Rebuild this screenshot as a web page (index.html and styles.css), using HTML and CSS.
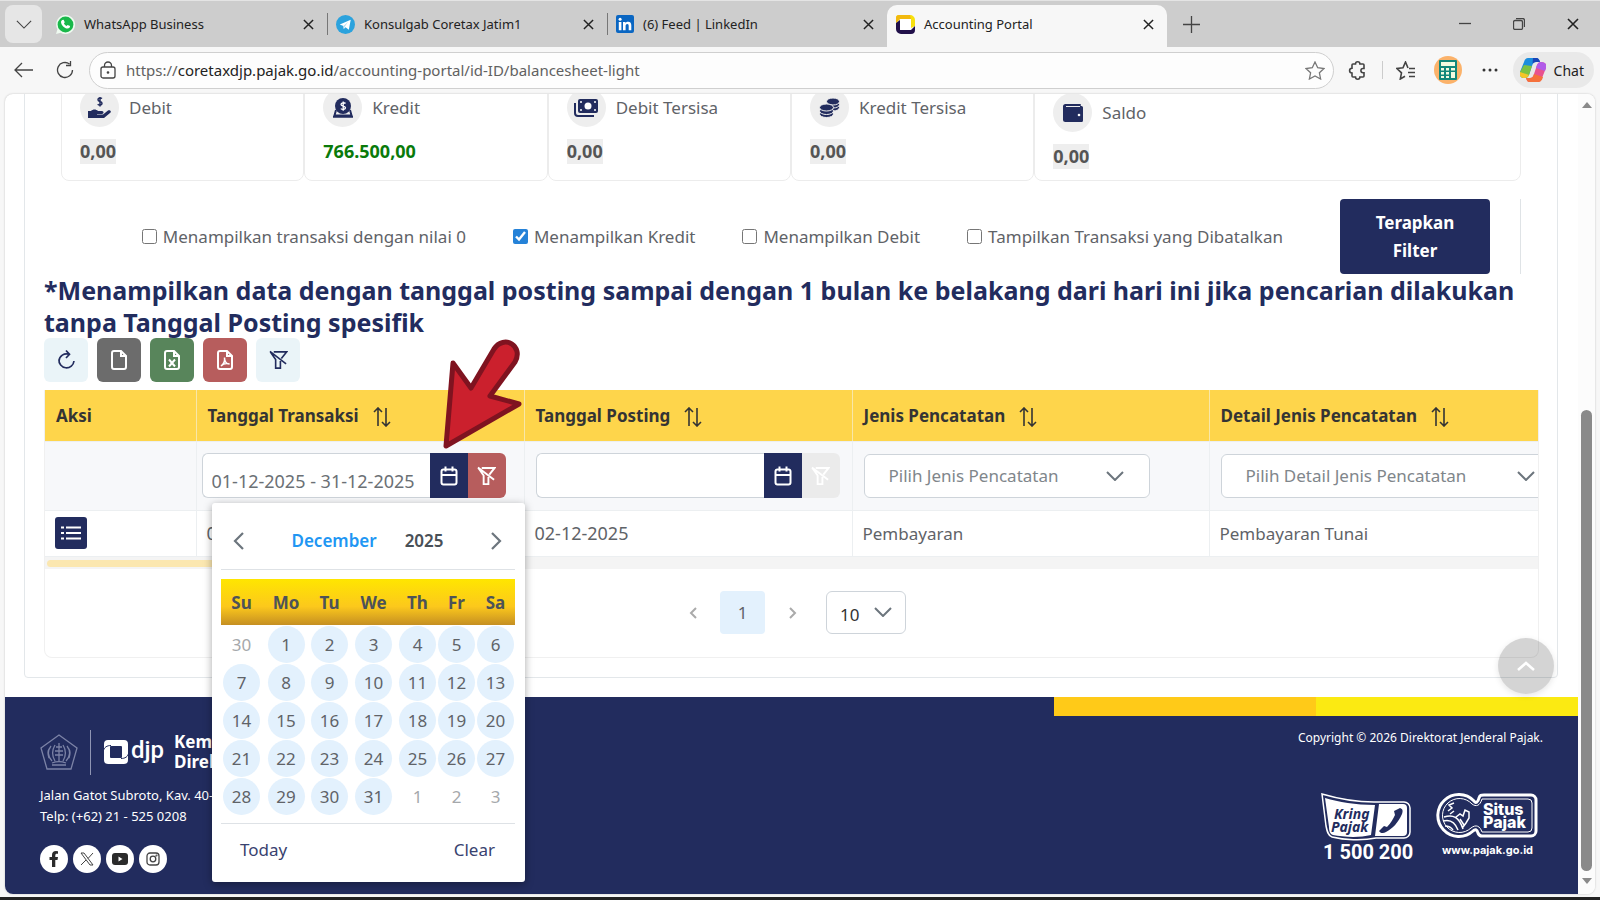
FILE: index.html
```html
<!DOCTYPE html>
<html lang="id">
<head>
<meta charset="utf-8">
<meta name="viewport" content="width=device-width, initial-scale=1">
<title>Accounting Portal</title>
<link rel="stylesheet" href="styles.css">
</head>
<body>
<svg class="defs" aria-hidden="true">
  <symbol id="i-close" viewBox="0 0 12 12"><path d="M1 1l10 10M11 1L1 11"/></symbol>
  <symbol id="i-down" viewBox="0 0 18 10"><path d="M1 1l8 8 8-8"/></symbol>
  <symbol id="i-sort" viewBox="0 0 18 20"><path d="M5 19V1M1 5l4-4 4 4M13 1v18M9 15l4 4 4-4"/></symbol>
  <symbol id="i-cal" viewBox="0 0 18 20"><rect x="1.500" y="3.500" width="15" height="15" rx="2"/><path d="M1.500 9h15M5.500 .5v5M12.500 .5v5"/></symbol>
  <symbol id="i-nofilter" viewBox="0 0 20 20"><path d="M5 1.500h13.500l-5.500 7M1.500 1.500l5.500 8V18.500h5V11M1 1l17 13"/></symbol>
  <symbol id="i-file" viewBox="0 0 16 20"><path d="M3 1h7l5 5v11a2 2 0 0 1-2 2H3a2 2 0 0 1-2-2V3a2 2 0 0 1 2-2zM10 1v5h5"/></symbol>
</svg>
<div class="browser">
  <header class="tabbar">
    <button class="tab-menu" aria-label="Tab menu"><svg class="ln" width="16" height="9" viewBox="0 0 18 10"><path d="M1 1l8 8 8-8"/></svg></button>
    <div class="tab">
      <svg width="19" height="19" viewBox="0 0 20 20"><path d="M10 0a10 10 0 1 1-5 18.600L0 20l1.500-5A10 10 0 0 1 10 0z" fill="#eefaf0"/><circle cx="10" cy="10" r="8.300" fill="#19b84a"/><path d="M6.500 5.200l1.500-.2 1.200 2.700-.8 1.200c.6 1.300 1.500 2 2.800 2.600l1-1.100 2.600 1.300c0 1.800-1.300 2.600-2.600 2.600C9 14.200 5.500 10.500 5.300 7.500c0-1 .5-1.800 1.200-2.300z" fill="#fff"/></svg>
      <span class="tab-title">WhatsApp Business</span>
      <button class="tab-x" aria-label="Close"><svg width="11" height="11"><use href="#i-close"/></svg></button>
    </div>
    <div class="tab">
      <svg width="19" height="19" viewBox="0 0 20 20"><circle cx="10" cy="10" r="10" fill="#2ba2dd"/><path d="M4 10l11.500-5-2 10.500-3.500-2.500-1.800 1.800-.4-3.300z" fill="#fff"/><path d="M7.800 11.500l5-4.300-3.600 5.200-1 2.400z" fill="#b9dff2"/></svg>
      <span class="tab-title">Konsulgab Coretax Jatim1</span>
      <button class="tab-x" aria-label="Close"><svg width="11" height="11"><use href="#i-close"/></svg></button>
    </div>
    <div class="tab">
      <svg width="18" height="18" viewBox="0 0 18 18"><rect width="18" height="18" rx="2" fill="#0a66c2"/><path d="M2.800 7h2.600v8.300H2.800zM7 7h2.500v1.200C10 7.300 11 6.800 12.200 6.800c2.300 0 3.100 1.500 3.100 3.800v4.700h-2.600v-4.200c0-1.200-.3-2-1.400-2s-1.700.8-1.700 2v4.200H7z" fill="#fff"/><circle cx="4.100" cy="4.200" r="1.500" fill="#fff"/></svg>
      <span class="tab-title">(6) Feed | LinkedIn</span>
      <button class="tab-x" aria-label="Close"><svg width="11" height="11"><use href="#i-close"/></svg></button>
    </div>
    <div class="tab tab-active">
      <svg width="19" height="19" viewBox="0 0 19 19"><path d="M3 0h11a5 5 0 0 1 5 5v6l-4 2V4H4L0 8V3a3 3 0 0 1 3-3z" fill="#f7e00e"/><path d="M3 0h11l1 4H4L0 8V3a3 3 0 0 1 3-3z" fill="#f2b90f"/><path d="M0 8l4-3v10h11l4-4v4a4 4 0 0 1-4 4H5a5 5 0 0 1-5-5z" fill="#21104a"/><rect x="4" y="4" width="11" height="11" rx="1" fill="#fff"/></svg>
      <span class="tab-title">Accounting Portal</span>
      <button class="tab-x" aria-label="Close"><svg width="11" height="11"><use href="#i-close"/></svg></button>
    </div>
    <button class="tab-new" aria-label="New tab"><svg class="ln" width="17" height="17" viewBox="0 0 17 17"><path d="M8.500 0v17M0 8.500h17"/></svg></button>
    <div class="win">
      <button aria-label="Minimize"><svg class="ln" width="12" height="12" viewBox="0 0 12 12"><path d="M0 5.500h12"/></svg></button>
      <button aria-label="Restore"><svg class="ln" width="12" height="12" viewBox="0 0 12 12"><rect x=".5" y="2.500" width="9" height="9" rx="1.500"/><path d="M3 .5h6.500a2 2 0 0 1 2 2V9"/></svg></button>
      <button aria-label="Close window"><svg class="ln" width="12" height="12"><use href="#i-close"/></svg></button>
    </div>
  </header>
  <nav class="toolbar">
    <button class="nav-btn" aria-label="Back"><svg class="ln" width="20" height="16" viewBox="0 0 20 16"><path d="M8 1L1 8l7 7M1 8h18"/></svg></button>
    <button class="nav-btn" aria-label="Reload"><svg class="ln" width="18" height="18" viewBox="0 0 18 18"><path d="M16.500 9A7.500 7.500 0 1 1 13.500 3M14.500 0v4.500H10"/></svg></button>
    <div class="address">
      <svg class="ln" width="16" height="18" viewBox="0 0 16 18"><rect x="1" y="6" width="14" height="11" rx="2"/><path d="M4.500 6V4.500a3.500 3.500 0 0 1 7 0V6"/><circle cx="8" cy="11.500" r=".7"/></svg>
      <div class="url" role="textbox" aria-label="Address"><span>https://</span>coretaxdjp.pajak.go.id<span>/accounting-portal/id-ID/balancesheet-light</span></div>
      <button aria-label="Favorite"><svg class="ln" width="20" height="19" viewBox="0 0 20 19"><path class="star" d="M10 1l2.700 5.700 6.300.8-4.600 4.300 1.200 6.200L10 15l-5.600 3 1.200-6.200L1 7.500l6.300-.8z"/></svg></button>
    </div>
    <button class="tb" aria-label="Extensions"><svg class="ln bold" width="19" height="19" viewBox="0 0 19 19"><path d="M5 3h2.500a2.200 2.200 0 0 1 4.400 0H15a1 1 0 0 1 1 1v3.500h-1a2 2 0 0 0 0 4.200h1V15a1 1 0 0 1-1 1h-3.100a2.200 2.200 0 0 1-4.400 0H5a1 1 0 0 1-1-1v-3a2.300 2.300 0 0 1 0-4.800V4a1 1 0 0 1 1-1z"/></svg></button>
    <span class="tb-sep"></span>
    <button class="tb" aria-label="Favorites"><svg class="ln bold" width="20" height="19" viewBox="0 0 20 19"><path d="M12 7L9.500 1 7 6.700 1 7.500l4.500 4.300L4.300 18 9 15.200M13 7.500h6M12 11.500h7M13 15.500h6"/></svg></button>
    <button class="tb calc" aria-label="Profile"><svg width="28" height="28" viewBox="0 0 28 28"><circle cx="14" cy="14" r="14" fill="#fbb26a"/><rect x="5" y="4" width="18" height="20" rx="1" fill="#12877a"/><path d="M7 6h14v4H7zM7 12h3v2.500H7zM12 12h3v2.500h-3zM17 12h4v2.500h-4zM7 16h3v2.500H7zM12 16h3v2.500h-3zM17 16h4v6h-4zM7 20h3v2H7zM12 20h3v2h-3z" fill="#f2fbe0"/></svg></button>
    <button class="tb" aria-label="More"><svg width="16" height="4" viewBox="0 0 16 4" fill="#333"><circle cx="2" cy="2" r="1.500"/><circle cx="8" cy="2" r="1.500"/><circle cx="14" cy="2" r="1.500"/></svg></button>
    <button class="chat">
      <svg width="26" height="24" viewBox="0 0 26 24"><path d="M8 0h9c1 0 2 1 3 4h-4c-2 0-3 1-4 4l-3 9c-1 2-2 3-4 3-4 0-6-2-5-6L4 4c1-3 2-4 4-4z" fill="#1b8ede"/><path d="M4 7l8 1-3 9c-1 2-2 3-4 3-4 0-6-2-5-6z" fill="#7cc243"/><path d="M0 14l9 3c-1 2-2 3-4 3-4 0-6-2-5-6z" fill="#f5c528"/><path d="M13 0h4c1 0 2 1 3 4h-4c-2 0-3 1-3.500 2z" fill="#1845b8"/><path d="M18 24H9c-1 0-2-1-3-4h4c2 0 3-1 4-4l3-9c1-2 2-3 4-3 4 0 6 2 5 6l-4 10c-1 3-2 4-4 4z" fill="#e8528f"/><path d="M16 10l1-3c1-2 2-3 4-3 4 0 6 2 5 6l-1 3z" fill="#b15be8"/><path d="M18 24H9c-1 0-2-1-3-4h4c2 0 3-1 4-4l9 3c-1 4-3 5-5 5z" fill="#f5713c"/></svg>
      Chat</button>
  </nav>

  <div class="view">
    <div class="page">
      <main class="panel">
        <section class="cards">
          <article class="card"><h2 class="card-title"><span class="disc"><svg width="23" height="21" viewBox="0 0 23 21" fill="#222c5e"><path d="M0 14h3c2-2 5-2 7 0h4c2 0 2 3 0 3H9v.6h6l5-4c2-1 4 1 2 2.500L16 21H0z"/><path class="dollar" d="M14 1.500c-1-.9-4-.8-4 1.200 0 2.200 4 1.300 4 3.600 0 2-3 2.200-4.300 1M12 0v9.500"/></svg></span>Debit</h2><p class="value muted"><span>0,00</span></p></article>
          <article class="card"><h2 class="card-title"><span class="disc"><svg width="20" height="20" viewBox="0 0 20 20"><circle cx="10" cy="8" r="8" fill="#222c5e"/><path d="M3 12L1.500 17.500h17L17 12M0 18.800h20" fill="none" stroke="#222c5e" stroke-width="2"/><path d="M12.500 5.500c-1-1.200-4.500-1-4.500 1 0 2 4.500 1 4.500 3.300 0 1.800-3.300 2.200-4.700.8M10.200 3.400v9.400" fill="none" stroke="#fff" stroke-width="1.300"/></svg></span>Kredit</h2><p class="value credit"><span>766.500,00</span></p></article>
          <article class="card"><h2 class="card-title"><span class="disc"><svg width="24" height="18" viewBox="0 0 24 18"><path d="M1 4v10a3 3 0 0 0 3 3h16" fill="none" stroke="#222c5e" stroke-width="2"/><rect x="4" width="20" height="14" rx="2" fill="#222c5e"/><circle cx="14" cy="7" r="3.500" fill="#fff"/><g fill="#fff"><circle cx="7" cy="3" r="1"/><circle cx="21" cy="3" r="1"/><circle cx="7" cy="11" r="1"/><circle cx="21" cy="11" r="1"/></g></svg></span>Debit Tersisa</h2><p class="value muted"><span>0,00</span></p></article>
          <article class="card"><h2 class="card-title"><span class="disc"><svg width="21" height="20" viewBox="0 0 21 20" fill="#222c5e" stroke="#eee"><ellipse cx="14" cy="9.500" rx="6.500" ry="3.500"/><ellipse cx="14" cy="6.500" rx="6.500" ry="3.500"/><ellipse cx="14" cy="3.500" rx="6.500" ry="3.500"/><ellipse cx="7.500" cy="16" rx="7" ry="3.500"/><ellipse cx="7.500" cy="13" rx="7" ry="3.500"/><ellipse cx="7.500" cy="9.500" rx="7" ry="3.500"/></svg></span>Kredit Tersisa</h2><p class="value muted"><span>0,00</span></p></article>
          <article class="card card-wide"><h2 class="card-title"><span class="disc"><svg width="20" height="18" viewBox="0 0 20 18"><path d="M2.500 0H17a1 1 0 0 1 0 2h1.500A1.500 1.500 0 0 1 20 3.500v13a1.500 1.500 0 0 1-1.500 1.500h-16A2.500 2.500 0 0 1 0 15.500v-13A2.500 2.500 0 0 1 2.500 0z" fill="#222c5e"/><path d="M3 2.500h14" stroke="#eee"/><circle cx="16" cy="11" r="1.300" fill="#fff"/></svg></span>Saldo</h2><p class="value muted"><span>0,00</span></p></article>
        </section>

        <form class="filters">
          <label><input type="checkbox">Menampilkan transaksi dengan nilai 0</label>
          <label><input type="checkbox" checked>Menampilkan Kredit</label>
          <label><input type="checkbox">Menampilkan Debit</label>
          <label><input type="checkbox">Tampilkan Transaksi yang Dibatalkan</label>
          <button type="button" class="apply">Terapkan Filter</button>
        </form>

        <h1 class="note">*Menampilkan data dengan tanggal posting sampai dengan 1 bulan ke belakang dari hari ini jika pencarian dilakukan tanpa Tanggal Posting spesifik</h1>

        <div class="tools">
          <button class="tool pale" aria-label="Refresh"><svg width="17" height="20" viewBox="0 0 17 20"><path d="M1 9.500A7.500 7.500 0 0 0 16 11M1 11A7.500 7.500 0 0 1 11 4.300M8 .5l3.500 3.800L8 8"/></svg></button>
          <button class="tool grey" aria-label="Export CSV"><svg width="16" height="20"><use href="#i-file"/></svg></button>
          <button class="tool green" aria-label="Export Excel"><svg width="16" height="20" viewBox="0 0 16 20"><use href="#i-file"/><path d="M5 9.500l6 7M11 9.500l-6 7"/></svg></button>
          <button class="tool red" aria-label="Export PDF"><svg width="16" height="20" viewBox="0 0 16 20"><use href="#i-file"/><path class="thin" d="M4 16c3-2 4-5 3.500-8.500C7.500 12 10 14 12.500 14 9 13 6 14 4 16z"/></svg></button>
          <button class="tool pale" aria-label="Clear filters"><svg class="slim" width="19" height="20"><use href="#i-nofilter"/></svg></button>
        </div>

        <div class="grid-wrap">
          <table class="data">
            <colgroup><col class="c-act"><col class="c-date"><col class="c-date"><col class="c-kind"><col></colgroup>
            <thead>
              <tr class="head">
                <th>Aksi</th>
                <th>Tanggal Transaksi<svg class="sort" width="18" height="20"><use href="#i-sort"/></svg></th>
                <th>Tanggal Posting<svg class="sort" width="18" height="20"><use href="#i-sort"/></svg></th>
                <th>Jenis Pencatatan<svg class="sort" width="18" height="20"><use href="#i-sort"/></svg></th>
                <th>Detail Jenis Pencatatan<svg class="sort" width="18" height="20"><use href="#i-sort"/></svg></th>
              </tr>
              <tr class="search">
                <td></td>
                <td class="near"><div class="datebox"><input type="text" aria-label="Tanggal Transaksi" value="01-12-2025 - 31-12-2025"><button class="cal" aria-label="Pilih tanggal"><svg width="18" height="20"><use href="#i-cal"/></svg></button><button class="clr" aria-label="Hapus filter"><svg width="19" height="20"><use href="#i-nofilter"/></svg></button></div></td>
                <td><div class="datebox"><input type="text" aria-label="Tanggal Posting"><button class="cal" aria-label="Pilih tanggal"><svg width="18" height="20"><use href="#i-cal"/></svg></button><button class="clr off" aria-label="Hapus filter" disabled><svg width="19" height="20"><use href="#i-nofilter"/></svg></button></div></td>
                <td><div class="pick"><select aria-label="Jenis Pencatatan"><option>Pilih Jenis Pencatatan</option></select><svg width="18" height="10"><use href="#i-down"/></svg></div></td>
                <td><div class="pick pick-long"><select aria-label="Detail Jenis Pencatatan"><option>Pilih Detail Jenis Pencatatan</option></select><svg width="18" height="10"><use href="#i-down"/></svg></div></td>
              </tr>
            </thead>
            <tbody>
              <tr class="row">
                <td><button class="list" aria-label="Detail"><svg width="20" height="14" viewBox="0 0 20 14"><path d="M5 1.500h15M5 7h15M5 12.500h15M0 1.500h3M0 7h3M0 12.500h3"/></svg></button></td>
                <td class="date">02-12-2025</td><td class="date">02-12-2025</td><td>Pembayaran</td><td>Pembayaran Tunai</td>
              </tr>
            </tbody>
          </table>
          <div class="hscroll"><div class="hthumb"></div></div>
          <div class="pager">
            <button class="pg" aria-label="Previous page"><svg width="8" height="12" viewBox="0 0 8 12"><path d="M7 1L2 6l5 5"/></svg></button>
            <button class="pg on">1</button>
            <button class="pg" aria-label="Next page"><svg width="8" height="12" viewBox="0 0 8 12"><path d="M1 1l5 5-5 5"/></svg></button>
            <div class="pick size"><select aria-label="Rows per page"><option>10</option></select><svg width="18" height="10"><use href="#i-down"/></svg></div>
          </div>
        </div>
      </main>

      <footer class="foot">
        <div class="stripes"><i></i><i></i></div>
        <div class="foot-body">
          <div class="foot-left">
            <div class="brand">
              <svg width="38" height="36" viewBox="0 0 38 36" fill="none" stroke="#7c83a6" stroke-width="1.300"><path d="M19 1l18 13-6 21H7L1 14z"/><path d="M11 12c-4 5-3 11 1 15M27 12c4 5 3 11-1 15M15 11c-3 5-3 11 0 16M23 11c3 5 3 11 0 16M19 9v18M16 13h6M15 17h8M15 21h8M12 29c5-2 9-2 14 0M12 31h14M9 15c-2 3-1 6 0 9M29 15c2 3 1 6 0 9"/></svg>
              <span class="brand-line"></span>
              <svg width="26" height="26" viewBox="0 0 26 26"><path d="M5 1h16a4 4 0 0 1 4 4v16a4 4 0 0 1-4 4H5a4 4 0 0 1-4-4V5a4 4 0 0 1 4-4zM8 7a1 1 0 0 0-1 1v10a1 1 0 0 0 1 1h10a1 1 0 0 0 1-1V8a1 1 0 0 0-1-1z" fill="#fff" fill-rule="evenodd"/><path d="M0 13C1 8 4 6.500 8 6.500M26 13c-1 5-4 6.500-8 6.500" fill="none" stroke="#222c5e"/></svg>
              <span class="djp">djp</span>
              <span class="ministry">Kementerian Keuangan<br>Direktorat Jenderal Pajak</span>
            </div>
            <address>Jalan Gatot Subroto, Kav. 40-42, Jakarta<br>Telp: (+62) 21 - 525 0208</address>
            <div class="social">
              <a href="#" aria-label="Facebook"><svg width="10" height="16" viewBox="0 0 10 16"><path d="M3 16V9H.5V6H3V4c0-2.600 1.500-4 4-4l2 .2v2.600H8C6.700 2.800 6.300 3.400 6.300 4.300V6H9l-.5 3H6.300v7z" fill="#2b2b2b"/></svg></a>
              <a href="#" aria-label="X"><svg width="14" height="14" viewBox="0 0 14 14" fill="none" stroke="#444"><path d="M1 1h3l9 12h-3zM13 1L8 6.500M6 8l-5 5"/></svg></a>
              <a href="#" aria-label="YouTube"><svg width="16" height="12" viewBox="0 0 16 12"><rect width="16" height="12" rx="3" fill="#2b2b2b"/><path d="M6.500 3.500v5l4-2.500z" fill="#fff"/></svg></a>
              <a href="#" aria-label="Instagram"><svg width="14" height="14" viewBox="0 0 14 14" fill="none" stroke="#444" stroke-width="1.300"><rect x="1" y="1" width="12" height="12" rx="3"/><circle cx="7" cy="7" r="2.800"/><circle cx="10.500" cy="3.500" r=".4"/></svg></a>
            </div>
          </div>
          <div class="foot-right">
            <p>Copyright © 2026 Direktorat Jenderal Pajak.</p>
            <div class="badges">
              <svg width="92" height="70" viewBox="0 0 92 70">
                <path d="M1 1C18 6 34 9 53 9h30a6 6 0 0 1 6 6v24a6 6 0 0 1-6 6H55c-14 3-32 2-44-1C7 43 6 38 5 33z" fill="none" stroke="#fff" stroke-width="1.500"/>
                <path d="M4 5c14 4 30 7 50 7l-4 30c-12 3-28 2-38 0-3-1-4-4-4-8zM58 11h24a4 4 0 0 1 4 4v24a4 4 0 0 1-4 4H54z" fill="#fff"/>
                <path d="M73 18l6-3c3 1 3 3 2 6-4 9-9 14-16 18-3 2-6 1-7-1l5-5 3 1c4-4 6-8 8-12z" fill="#222c5e"/>
                <text class="kring" x="13" y="26">Kring</text><text class="kring" x="10" y="39">Pajak</text>
                <text class="phone" x="2" y="66">1 500 200</text>
              </svg>
              <svg width="102" height="64" viewBox="0 0 102 64">
                <g fill="none" stroke="#fff"><path stroke-width="3" d="M38 8c2 3 4 1 5-3 1-3 2-3 5-3h47a5 5 0 0 1 5 5v31a5 5 0 0 1-5 5H46c-3 0-3-1-4-3-1-4-3-4-5-2A21 21 0 1 1 38 8z"/><path stroke-width="1" d="M36 11c4 3 8 2 10-5h46a4 4 0 0 1 4 4v25a4 4 0 0 1-4 4H46c-2-6-6-8-11-4A17 17 0 1 1 36 11z"/><path stroke-width="1.500" d="M8 24c9-3 15 0 19 12M7 28c7-2 12 1 15 9M9 33c4 0 6 1 8 4M12 18l4-3-3-3 5-2M14 21l4-3M20 24l4-3 3 2 2-6 4 2v6l-3 5-3 4M24 26l4 6"/></g>
                <text class="situs" x="47" y="22">Situs</text><text class="situs" x="47" y="35">Pajak</text>
                <text class="www" x="6" y="61">www.pajak.go.id</text>
              </svg>
            </div>
          </div>
        </div>
      </footer>
    </div>
    <div class="vscroll"><span class="up"></span><span class="thumb"></span><span class="dn"></span></div>
    <button class="totop" aria-label="Back to top"><svg width="18" height="10" viewBox="0 0 18 10"><path d="M1 9l8-7 8 7"/></svg></button>
  </div>
  <div class="taskbar"></div>
</div>

<div class="datepicker">
  <div class="dp-head">
    <button aria-label="Previous month"><svg width="11" height="18" viewBox="0 0 11 18"><path d="M10 1L2 9l8 8"/></svg></button>
    <div class="dp-title"><button class="month">December</button><button class="year">2025</button></div>
    <button aria-label="Next month"><svg width="11" height="18" viewBox="0 0 11 18"><path d="M1 1l8 8-8 8"/></svg></button>
  </div>
  <table class="dp-grid">
    <colgroup><col class="w41"><col class="w48"><col class="w39"><col class="w49"><col class="w39"><col class="w39"><col class="w39"></colgroup>
    <thead><tr><th>Su</th><th>Mo</th><th>Tu</th><th>We</th><th>Th</th><th>Fr</th><th>Sa</th></tr></thead>
    <tbody>
      <tr><td class="out"><span>30</span></td><td><span>1</span></td><td><span>2</span></td><td><span>3</span></td><td><span>4</span></td><td><span>5</span></td><td><span>6</span></td></tr>
      <tr><td><span>7</span></td><td><span>8</span></td><td><span>9</span></td><td><span>10</span></td><td><span>11</span></td><td><span>12</span></td><td><span>13</span></td></tr>
      <tr><td><span>14</span></td><td><span>15</span></td><td><span>16</span></td><td><span>17</span></td><td><span>18</span></td><td><span>19</span></td><td><span>20</span></td></tr>
      <tr><td><span>21</span></td><td><span>22</span></td><td><span>23</span></td><td><span>24</span></td><td><span>25</span></td><td><span>26</span></td><td><span>27</span></td></tr>
      <tr><td><span>28</span></td><td><span>29</span></td><td><span>30</span></td><td><span>31</span></td><td class="out"><span>1</span></td><td class="out"><span>2</span></td><td class="out"><span>3</span></td></tr>
    </tbody>
  </table>
  <div class="dp-foot"><button>Today</button><button>Clear</button></div>
</div>

<svg class="pointer" width="84" height="116" viewBox="0 0 84 116"><path d="M9 110L16 27l18 25L57 13c10-15 30-3 21 13L53 60l29 8z"/></svg>
</body>
</html>
```

FILE: styles.css
```css
* { box-sizing: border-box; }
body { margin: 0; font-family: "Noto Sans", "Open Sans", sans-serif; font-size: 17px; color: #5f6368; background: #f7f7f7; }
button { font: inherit; color: inherit; background: none; border: 0; padding: 0; margin: 0; display: flex; align-items: center; justify-content: center; }
h1, h2, p { margin: 0; }
svg { flex: none; display: block; }
.defs { position: absolute; width: 0; height: 0; }
.ln { fill: none; stroke: #444; stroke-width: 1.3; }
.ln.bold { stroke-width: 1.6; }
.browser { display: flex; flex-direction: column; height: 100vh; overflow: hidden; }

.tabbar { display: flex; height: 47px; flex: none; background: #cdcdcd; border-top: 1px solid #e4e4e4; padding: 4px 0 0 5px; font-size: 13px; color: #222; }
.tab-menu { width: 37px; height: 38px; background: #e6e6e6; border-radius: 8px; margin-right: 5px; }
.tab { display: flex; align-items: center; width: 280px; padding: 0 13px 4px 9px; gap: 9px; position: relative; }
.tab + .tab::before { content: ""; position: absolute; left: 0; top: 8px; width: 1px; height: 22px; background: #777; }
.tab.tab-active::before { display: none; }
.tab-active { background: #f7f7f7; border-radius: 10px 10px 0 0; }
.tab-title { flex: 1; white-space: nowrap; }
.tab-x svg, .win use { stroke: #222; stroke-width: 1.6; }
.tab-new { width: 48px; height: 38px; }
.win { display: flex; margin-left: auto; }
.win button { width: 54px; height: 38px; }

.toolbar { display: flex; align-items: center; height: 47px; flex: none; padding: 0 6px 1px 3px; background: #f7f7f7; }
.nav-btn { width: 41px; height: 36px; }
.address { flex: 1; display: flex; align-items: center; height: 37px; margin-left: 4px; border: 1px solid #cfcfcf; border-radius: 19px; background: #fdfdfd; padding: 0 8px 0 10px; gap: 10px; font-size: 15px; color: #222; }
.url { flex: 1; white-space: nowrap; }
.url span { color: #616161; }
.star { stroke: #777; }
.tb { width: 42px; height: 36px; }
.toolbar > .address + .tb { margin-left: 3px; }
.tb-sep { width: 1px; height: 18px; background: #ccc; margin: 0 2px 0 3px; }
.chat { height: 36px; border-radius: 18px; background: #e9e9e9; padding: 0 10px 0 7px; gap: 8px; font-size: 14px; color: #222; margin-left: 2px; }

.view { flex: 1; min-height: 0; display: flex; margin: 0 5px 3px; border-radius: 8px; background: #fff; overflow: hidden; position: relative; box-shadow: 0 0 2px #bbb; }
.page { flex: 1; min-width: 0; display: flex; flex-direction: column; margin-top: -20px; }
.panel { margin: 0 20px 19px 19px; border: 1px solid #e3e7ea; border-radius: 4px; padding: 0 18px 19px 19px; }
.cards { display: grid; grid-template-columns: 1fr 1fr 1fr 1fr 2fr; margin: 0 18px 0 17px; }
.card { border: 1px solid #ececec; border-radius: 8px; padding: 12px 18px 16px 18px; }
.card-wide { padding: 17px 18px 11px 18px; }
.card-title { display: flex; align-items: center; gap: 10px; font-size: 17px; font-weight: 400; height: 39px; }
.disc { width: 39px; height: 39px; border-radius: 50%; background: #eee; display: flex; align-items: center; justify-content: center; }
.dollar { fill: none; stroke: #222c5e; stroke-width: 1.5; }
.value { margin-top: 12px; line-height: 25px; font-size: 18px; font-weight: 700; color: #555; }
.value span { display: inline-block; }
.muted span { background: #eee; }
.credit { color: #0a7a0a; }

.filters { display: flex; align-items: center; justify-content: flex-end; gap: 47px; margin: 18px 18px 0; padding-right: 30px; border-right: 1px solid #dfe3e6; }
.filters label { display: flex; align-items: center; gap: 6px; white-space: nowrap; }
.filters input { width: 15px; height: 15px; margin: 0; accent-color: #2582d8; }
.apply { width: 150px; height: 75px; margin-left: 10px; padding: 0 20px; background: #222c5e; color: #fff; border-radius: 4px; font-weight: 700; line-height: 28px; }
.note { font-size: 25px; line-height: 32px; font-weight: 700; color: #222c5e; }

.tools { display: flex; gap: 9px; margin-bottom: 8px; }
.tool { width: 44px; height: 44px; border-radius: 6px; }
.tool svg { fill: none; stroke: #fff; stroke-width: 2; overflow: visible; }
.tool .thin { stroke-width: 1.5; }
.tool.pale svg { stroke: #222c5e; }
.tool svg.slim, .tool.pale svg { stroke-width: 1.7; }
.pale { background: #eaf4f8; }
.grey { background: #6c6c6c; }
.green { background: #58855b; }
.red { background: #b75d5d; }

.grid-wrap { overflow: hidden; border: 1px solid #f0f0f0; border-top: 0; border-radius: 0 0 8px 8px; }
.data { width: 100%; table-layout: fixed; border-collapse: collapse; }
.c-act { width: 151px; } .c-date { width: 328px; } .c-kind { width: 357px; }
.data th, .data td { padding: 0 11px; text-align: left; border-right: 1px solid #eceff1; border-bottom: 1px solid #eceff1; white-space: nowrap; }
.data th:last-child, .data td:last-child { border-right: 0; }
.data .head th { height: 51px; background: #fed54b; color: #343434; border-right-color: #f8e7a8; }
.sort { display: inline-block; vertical-align: middle; margin-left: 14px; fill: none; stroke: #343434; stroke-width: 1.6; }
.data .search td { height: 69px; background: #f7f8fa; }
.data .search .near { padding: 0 6px 0 5px; }
.data .row td { height: 46px; padding: 0 10px; }
.data .row .date { font-size: 18px; }
.datebox { display: flex; width: 304px; height: 45px; }
.datebox input { width: 229px; min-width: 0; border: 1px solid #ced4da; border-right: 0; border-radius: 6px 0 0 6px; background: #fff; font: inherit; font-size: 18px; color: #6b7075; padding: 10px 0 0 9px; }
.datebox button { width: 38px; }
.datebox svg { fill: none; stroke: #fff; stroke-width: 2; }
.cal { background: #222c5e; }
.clr { background: #b75d5d; border-radius: 0 6px 6px 0; }
.clr.off { background: #ebebeb; }
.pick { position: relative; width: 286px; height: 44px; }
.pick-long { width: 340px; }
.pick select { appearance: none; width: 100%; height: 100%; border: 1px solid #ced4da; border-radius: 6px; background: #fff; font: inherit; color: #80868b; padding: 0 0 0 24px; }
.pick svg { position: absolute; right: 26px; top: 17px; fill: none; stroke: #6c757d; stroke-width: 2; pointer-events: none; }
.list { width: 32px; height: 32px; background: #222c5e; border-radius: 3px; }
.list svg { stroke: #fff; stroke-width: 2; }
.hscroll { height: 12px; background: #f4f4f4; padding: 3px 2px 2px; }
.hthumb { height: 7px; width: 60%; max-width: 330px; background: #fbe7b0; border-radius: 4px; }
.pager { display: flex; align-items: center; justify-content: center; height: 88px; gap: 5px; padding-right: 7px; }
.pg { width: 45px; height: 43px; border-radius: 4px; }
.pg svg { fill: none; stroke: #aaa; stroke-width: 2; }
.pg.on { background: #e3f1fd; }
.size { width: 80px; height: 43px; margin-left: 6px; }
.size select { color: #333; padding: 4px 0 0 13px; }
.size svg { right: 14px; top: 16px; }

.foot { flex: 1; background: #222c5e; color: #fff; font-size: 13px; }
.stripes { display: flex; width: 33.33%; height: 19px; margin-left: auto; }
.stripes i { flex: 1; background: #ffca18; }
.stripes i + i { background: #fbea12; }
.foot-body { display: flex; justify-content: space-between; padding: 14px 35px 0 35px; }
.brand { display: flex; align-items: center; height: 45px; }
.brand-line { width: 1px; height: 45px; background: #8f95b3; margin: 0 12px; }
.djp { font-size: 24px; line-height: 26px; height: 30px; font-weight: 500; width: 45px; padding-left: 2px; font-family: Roboto, sans-serif; }
.ministry { font-size: 17px; line-height: 20px; font-weight: 700; white-space: nowrap; }
.foot address { font-style: normal; line-height: 21px; margin-top: 10px; }
.social { display: flex; gap: 5px; margin-top: 18px; }
.social a { width: 28px; height: 28px; border-radius: 50%; background: #fff; display: flex; align-items: center; justify-content: center; }
.foot-right { display: flex; flex-direction: column; align-items: flex-end; }
.foot-right p { font-size: 12px; line-height: 16px; }
.badges { display: flex; gap: 23px; margin: 47px 5px 0 0; }
.badges svg text { font-weight: 700; fill: #fff; font-family: "Noto Sans", sans-serif; }
.badges svg .kring { fill: #222c5e; font-size: 14px; font-style: italic; }
.badges svg .phone { font-family: Roboto, sans-serif; font-size: 20px; }
.badges svg .situs { font-size: 16px; font-family: Inter, sans-serif; font-weight: 800; }
.badges svg .www { font-size: 11px; font-family: Inter, sans-serif; }

.vscroll { width: 17px; flex: none; display: flex; flex-direction: column; align-items: center; background: #fcfcfc; padding: 8px 0 10px; }
.up, .dn { border: 5px solid transparent; border-top: 0; border-bottom: 6px solid #8a8a8a; }
.dn { border-bottom: 0; border-top: 6px solid #8a8a8a; margin-top: 7px; }
.thumb { width: 11px; height: 461px; margin-top: auto; border-radius: 6px; background: #8a8a8a; }
.totop { position: absolute; right: 41px; bottom: 200px; width: 56px; height: 56px; border-radius: 50%; background: rgba(0,0,0,.17); box-shadow: 0 2px 6px rgba(0,0,0,.1); }
.totop svg { fill: none; stroke: #fff; stroke-width: 2.5; }
.taskbar { height: 3px; flex: none; background: #222; }

.datepicker { position: absolute; left: 212px; top: 503px; width: 313px; height: 379px; padding: 9px 10px 0 9px; background: #fff; border-radius: 3px; box-shadow: 0 2px 8px rgba(0,0,0,.35); }
.dp-head { display: flex; align-items: center; justify-content: space-between; height: 58px; padding: 0 13px 0 12px; border-bottom: 1px solid #dee2e6; }
.dp-head svg { fill: none; stroke: #6c757d; stroke-width: 2.2; }
.dp-title { display: flex; gap: 28px; font-weight: 600; }
.month { color: #2196f3; }
.year { color: #495057; }
.dp-grid { width: 100%; margin-top: 9px; border-collapse: collapse; table-layout: fixed; text-align: center; }
.w41 { width: 41px; } .w48 { width: 48px; } .w39 { width: 39px; } .w49 { width: 49px; }
.dp-grid th, .dp-grid td { padding: 0; }
.dp-grid thead { background: linear-gradient(#ffe600, #fcc81c 60%, #c58f22); }
.dp-grid th { height: 46px; color: #4d5358; }
.dp-grid td { height: 38px; }
.dp-grid span { display: block; width: 37px; height: 37px; line-height: 37px; margin: 0 auto; border-radius: 50%; background: #e3f1fd; }
.dp-grid .out span { background: none; color: #a5a8ab; }
.dp-foot { display: flex; justify-content: space-between; margin-top: 8px; border-top: 1px solid #dee2e6; padding: 14px 20px 0 19px; color: #39426f; }

.pointer { position: absolute; left: 437px; top: 336px; overflow: visible; pointer-events: none; }
.pointer path { fill: #cb202d; stroke: #7f1320; stroke-width: 5; stroke-linejoin: round; }
```
